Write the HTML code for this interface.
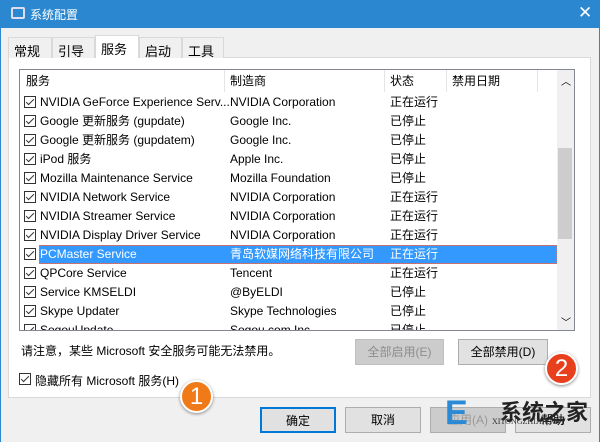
<!DOCTYPE html><html><head><meta charset="utf-8"><style>
*{margin:0;padding:0;box-sizing:border-box}
body{width:600px;height:442px;overflow:hidden;background:#f0f0f0;font-family:"Liberation Sans","Noto Sans CJK SC",sans-serif;font-size:12px;color:#000;position:relative}
.a{position:absolute}
.title{left:0;top:0;width:600px;height:28px;background:#2b88d0;color:#fff}
.tab{top:37px;height:21px;border:1px solid #d9d9d9;border-bottom:none;background:#f0f0f0;padding:3px 0 0 5px;font-size:13px}
.row{left:21px;width:536px;height:19px;line-height:18px}
.cb{position:absolute;left:3px;top:3px;width:12px;height:12px;border:1px solid #333;background:#fff}
.cb:after{content:"";position:absolute;left:3px;top:0px;width:3px;height:7px;border:solid #333;border-width:0 1.5px 1.5px 0;transform:rotate(45deg)}
.c1{position:absolute;left:19px}.c2{position:absolute;left:209px}.c3{position:absolute;left:369px}
.btn{height:26px;border:1px solid #adadad;background:#e1e1e1;text-align:center;line-height:24px}
</style></head><body>
<div class="a title"><div class="a" style="left:11px;top:7px;width:14px;height:12px;border:2px solid #dde;border-radius:2px"></div><div class="a" style="left:30px;top:6px;font-size:12px">系统配置</div><div class="a" style="left:578px;top:3px;font-size:17px">✕</div></div>
<div class="a" style="left:0;top:28px;width:1px;height:414px;background:#2b88d0"></div>
<div class="a" style="left:599px;top:28px;width:1px;height:414px;background:#2b88d0"></div>
<div class="a" style="left:8px;top:57px;width:583px;height:341px;background:#fff;border:1px solid #d9d9d9"></div>
<div class="a tab" style="left:8px;width:44px">常规</div>
<div class="a tab" style="left:52px;width:43px">引导</div>
<div class="a tab" style="left:95px;top:35px;height:23px;width:44px;background:#fff">服务</div>
<div class="a tab" style="left:139px;width:43px">启动</div>
<div class="a tab" style="left:182px;width:42px">工具</div>
<div class="a" style="left:19px;top:69px;width:556px;height:262px;border:1px solid #828790;background:#fff;overflow:hidden">
<div class="a" style="left:0;top:0;width:537px;height:22px;line-height:22px">
<span class="a" style="left:6px">服务</span><span class="a" style="left:210px">制造商</span><span class="a" style="left:370px">状态</span><span class="a" style="left:432px">禁用日期</span>
<div class="a" style="left:204px;top:0;width:1px;height:22px;background:#e5e5e5"></div><div class="a" style="left:364px;top:0;width:1px;height:22px;background:#e5e5e5"></div><div class="a" style="left:426px;top:0;width:1px;height:22px;background:#e5e5e5"></div><div class="a" style="left:517px;top:0;width:1px;height:22px;background:#e5e5e5"></div>
</div>
<div class="a" style="left:537px;top:0;width:17px;height:260px;background:#f0f0f0"><div class="a" style="left:4px;top:3px;font-size:10px">︿</div><div class="a" style="left:1px;top:78px;width:14px;height:91px;background:#cdcdcd"></div><div class="a" style="left:4px;top:244px;font-size:10px">﹀</div></div>
</div>
<div class="a" style="left:0;top:0">
<div class="a row" style="top:93px"><i class="cb"></i><span class="c1">NVIDIA GeForce Experience Serv...</span><span class="c2">NVIDIA Corporation</span><span class="c3">正在运行</span></div>
<div class="a row" style="top:112px"><i class="cb"></i><span class="c1">Google 更新服务 (gupdate)</span><span class="c2">Google Inc.</span><span class="c3">已停止</span></div>
<div class="a row" style="top:131px"><i class="cb"></i><span class="c1">Google 更新服务 (gupdatem)</span><span class="c2">Google Inc.</span><span class="c3">已停止</span></div>
<div class="a row" style="top:150px"><i class="cb"></i><span class="c1">iPod 服务</span><span class="c2">Apple Inc.</span><span class="c3">已停止</span></div>
<div class="a row" style="top:169px"><i class="cb"></i><span class="c1">Mozilla Maintenance Service</span><span class="c2">Mozilla Foundation</span><span class="c3">已停止</span></div>
<div class="a row" style="top:188px"><i class="cb"></i><span class="c1">NVIDIA Network Service</span><span class="c2">NVIDIA Corporation</span><span class="c3">正在运行</span></div>
<div class="a row" style="top:207px"><i class="cb"></i><span class="c1">NVIDIA Streamer Service</span><span class="c2">NVIDIA Corporation</span><span class="c3">正在运行</span></div>
<div class="a row" style="top:226px"><i class="cb"></i><span class="c1">NVIDIA Display Driver Service</span><span class="c2">NVIDIA Corporation</span><span class="c3">正在运行</span></div>
<div class="a" style="left:39px;top:245px;width:518px;height:19px;background:#3399ff;border:1px dotted #c77"></div>
<div class="a row" style="top:245px;color:#fff"><i class="cb"></i><span class="c1">PCMaster Service</span><span class="c2">青岛软媒网络科技有限公司</span><span class="c3">正在运行</span></div>
<div class="a row" style="top:264px"><i class="cb"></i><span class="c1">QPCore Service</span><span class="c2">Tencent</span><span class="c3">正在运行</span></div>
<div class="a row" style="top:283px"><i class="cb"></i><span class="c1">Service KMSELDI</span><span class="c2">@ByELDI</span><span class="c3">已停止</span></div>
<div class="a row" style="top:302px"><i class="cb"></i><span class="c1">Skype Updater</span><span class="c2">Skype Technologies</span><span class="c3">已停止</span></div>
<div class="a" style="left:21px;top:321px;width:536px;height:9px;overflow:hidden"><div class="a row" style="left:0;top:0"><i class="cb"></i><span class="c1">SogouUpdate</span><span class="c2">Sogou.com Inc.</span><span class="c3">已停止</span></div></div>
</div>
<div class="a" style="left:21px;top:342px">请注意，某些 Microsoft 安全服务可能无法禁用。</div>
<div class="a btn" style="left:355px;top:339px;width:89px;color:#8d8d8d;background:#ccc;border-color:#bfbfbf">全部启用(E)</div>
<div class="a btn" style="left:458px;top:339px;width:90px">全部禁用(D)</div>
<div class="a" style="left:19px;top:373px;width:14px;height:14px"><i class="cb" style="left:0;top:0"></i></div>
<div class="a" style="left:35px;top:372px">隐藏所有 Microsoft 服务(H)</div>
<div class="a btn" style="left:260px;top:407px;width:76px;border:2px solid #0078d7">确定</div>
<div class="a btn" style="left:345px;top:407px;width:76px">取消</div>
<div class="a btn" style="left:430px;top:407px;width:76px;color:#999;background:#ccc">应用(A)</div>
<div class="a btn" style="left:515px;top:407px;width:76px">帮助</div>
<div class="a" style="left:180px;top:380px;width:33px;height:33px;border-radius:50%;background:#f07a18;border:2px solid #fff;box-shadow:0 1px 3px #888;color:#fff;font-size:24px;text-align:center;line-height:29px">1</div>
<div class="a" style="left:545px;top:352px;width:33px;height:33px;border-radius:50%;background:#e8401c;border:2px solid #fff;box-shadow:0 1px 3px #888;color:#fff;font-size:24px;text-align:center;line-height:29px">2</div>
<div class="a" style="left:445px;top:393px;width:50px;height:40px;color:#2a8ad6;font-size:34px;font-weight:bold;line-height:40px">E</div>
<div class="a" style="left:500px;top:395px;font-size:22px;font-weight:bold;color:#222">系统之家</div>
<div class="a" style="left:492px;top:417px;font-size:8px;color:#333;font-family:'Liberation Serif',serif">XITONGZHIJIA.NET</div>
</body></html>
